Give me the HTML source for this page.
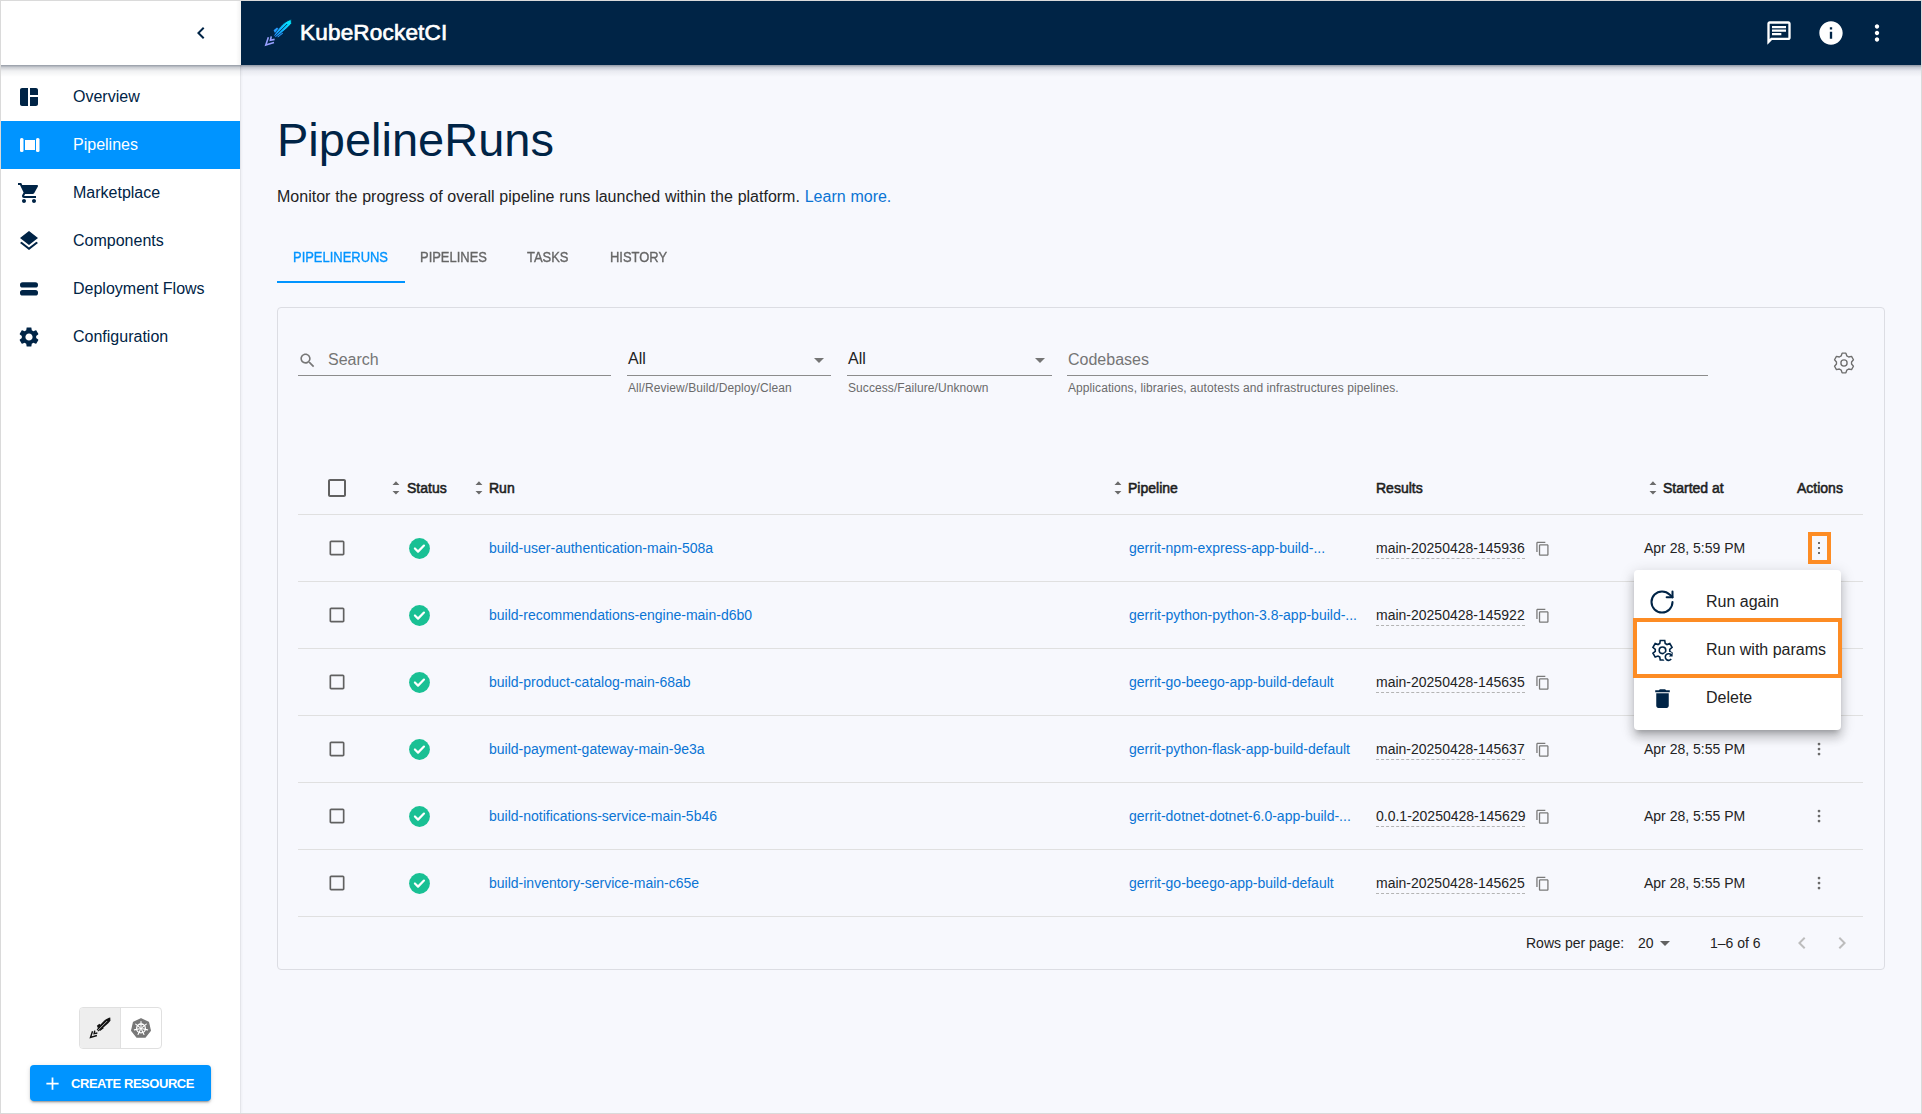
<!DOCTYPE html>
<html><head><meta charset="utf-8">
<style>
*{box-sizing:border-box;margin:0;padding:0}
html,body{width:1922px;height:1114px;overflow:hidden}
body{font-family:"Liberation Sans",sans-serif;background:#f7f8fd;position:relative;color:#232323}
.frame{position:absolute;left:0;top:0;width:1922px;height:1114px;border:1px solid #dadada;pointer-events:none;z-index:50}
.abs{position:absolute}
svg{display:block}
/* header */
.topleft{position:absolute;left:1px;top:1px;width:240px;height:64px;background:#fff;z-index:5}
.hdr{position:absolute;left:241px;top:1px;width:1680px;height:64px;background:#002446;z-index:5}
.hshadow{position:absolute;left:1px;top:65px;width:1920px;height:12px;background:linear-gradient(rgba(0,15,40,.42) 0px,rgba(0,15,40,.2) 2.5px,rgba(0,15,40,.06) 6px,rgba(0,15,40,0) 12px);z-index:4}
.tlshade{position:absolute;left:236px;top:1px;width:5px;height:64px;background:linear-gradient(90deg,rgba(0,0,0,0),rgba(0,0,0,.05));z-index:5}
.side{position:absolute;left:1px;top:65px;width:240px;height:1048px;background:#fff;border-right:1px solid #e4e5ea;box-shadow:1px 0 2px rgba(0,0,0,.04);z-index:3}
.nav{position:absolute;left:0;width:239px;height:48px;margin-top:1px}
.nav .ic{position:absolute;left:16px;top:12px;width:24px;height:24px}
.nav .tx{position:absolute;left:72px;top:0;line-height:48px;font-size:16px;color:#002446}
.nav.act{background:#0094ff}
.nav.act .tx{color:#fff}
.main{position:absolute;left:0;top:0;width:1922px;height:1114px}
.t{white-space:nowrap}
.tab{top:247px;font-size:14px;line-height:20px;color:#666;white-space:nowrap;transform:scaleX(0.925);transform-origin:0 0;-webkit-text-stroke:0.35px #666}
.tab.act{-webkit-text-stroke:0.35px #0094ff}
.tab.act{color:#0094ff}
.card{position:absolute;left:277px;top:307px;width:1608px;height:663px;border:1px solid #dcdde3;border-radius:4px}
.uline{top:375px;height:1px;background:#8c8c8c}
.help{top:380px;font-size:12px;line-height:16px;color:#6b6b6b;white-space:nowrap;letter-spacing:0.08px}
.th{top:478px;font-size:14px;line-height:20px;color:#1e1e1e;white-space:nowrap;-webkit-text-stroke:0.55px #1e1e1e}
.td{font-size:14px;line-height:20px;color:#232323;white-space:nowrap}
.lk{color:#0a74d4}
.res{border-bottom:1px dashed #b4b4b4;line-height:19px;height:21px;padding-top:1px}
.rline{left:298px;width:1565px;height:1px;background:#e0e0e0}
.menu{position:absolute;left:1634px;top:570px;width:207px;height:160px;background:#fff;border-radius:4px;box-shadow:0 5px 5px -3px rgba(0,0,0,.2),0 8px 10px 1px rgba(0,0,0,.14),0 3px 14px 2px rgba(0,0,0,.12);z-index:10}
.mi{left:72px;font-size:16px;line-height:24px;color:#232323;white-space:nowrap}
.obox{border:4px solid #fd8c24;z-index:12}
.btn{left:30px;top:1065px;width:181px;height:36px;background:#0094ff;border-radius:4px;box-shadow:0 3px 1px -2px rgba(0,0,0,.2),0 2px 2px 0 rgba(0,0,0,.14),0 1px 5px 0 rgba(0,0,0,.12);z-index:6}
</style></head><body>
<div class="frame"></div>
<div class="topleft">
  <svg class="abs" style="left:188px;top:20px" width="24" height="24" viewBox="0 0 24 24"><path fill="#002446" d="M15.41 7.41L14 6l-6 6 6 6 1.41-1.41L10.83 12z"/></svg>
</div>
<div class="hdr">
  <div class="abs" style="left:59px;top:0;line-height:64px;font-size:22.5px;letter-spacing:0.2px;-webkit-text-stroke:0.7px #fff;color:#fff">KubeRocketCI</div>
</div>
<div class="hshadow"></div><div class="tlshade"></div>
<div class="side">
  <div class="nav" style="top:7px"><svg class="ic" viewBox="0 0 24 24"><path fill="#002446" d="M11 21H5c-1.1 0-2-.9-2-2V5c0-1.1.9-2 2-2h6v18zm2 0h6c1.1 0 2-.9 2-2v-7h-8v9zm8-11V5c0-1.1-.9-2-2-2h-6v7h8z"/></svg><div class="tx">Overview</div></div>
  <div class="nav act" style="top:55px"><svg class="ic" viewBox="0 0 24 24"><rect x="3" y="5" width="3.5" height="14" rx="1.5" fill="#fff"/><rect x="8" y="7" width="10" height="10" fill="#fff"/><rect x="19" y="5" width="3.5" height="14" rx="1.5" fill="#fff"/></svg><div class="tx">Pipelines</div></div>
  <div class="nav" style="top:103px"><svg class="ic" viewBox="0 0 24 24"><path fill="#002446" d="M7 18c-1.1 0-1.99.9-1.99 2S5.9 22 7 22s2-.9 2-2-.9-2-2-2zM1 2v2h2l3.6 7.59-1.35 2.45c-.16.28-.25.61-.25.96 0 1.1.9 2 2 2h12v-2H7.42c-.14 0-.25-.11-.25-.25l.03-.12.9-1.630h7.45c.75 0 1.41-.41 1.75-1.03l3.58-6.49c.08-.14.12-.31.12-.48 0-.55-.45-1-1-1H5.21l-.94-2H1zm16 16c-1.1 0-1.99.9-1.99 2s.89 2 1.99 2 2-.9 2-2-.9-2-2-2z"/></svg><div class="tx">Marketplace</div></div>
  <div class="nav" style="top:151px"><svg class="ic" viewBox="0 0 24 24"><path fill="#002446" d="M11.99 18.54l-7.37-5.73L3 14.07l9 7 9-7-1.63-1.27-7.38 5.74zM12 16l7.36-5.73L21 9l-9-7-9 7 1.63 1.27L12 16z"/></svg><div class="tx">Components</div></div>
  <div class="nav" style="top:199px"><svg class="ic" viewBox="0 0 24 24"><rect x="3" y="5.2" width="18" height="5.3" rx="2.6" fill="#002446"/><rect x="3" y="13" width="18" height="5.6" rx="2.6" fill="#002446"/></svg><div class="tx">Deployment Flows</div></div>
  <div class="nav" style="top:247px"><svg class="ic" viewBox="0 0 24 24"><path fill="#002446" d="M19.14 12.94c.04-.3.06-.61.06-.94 0-.32-.02-.64-.07-.94l2.03-1.58c.18-.14.23-.41.12-.61l-1.92-3.32c-.12-.22-.37-.29-.59-.22l-2.39.96c-.5-.38-1.030-.7-1.62-.94l-.36-2.54c-.04-.24-.24-.41-.48-.41h-3.84c-.24 0-.43.17-.47.41l-.36 2.54c-.59.24-1.13.57-1.62.94l-2.39-.96c-.22-.08-.47 0-.59.22L2.74 8.87c-.12.21-.08.47.12.61l2.03 1.58c-.05.3-.09.63-.09.94s.02.64.07.94l-2.03 1.58c-.18.14-.23.41-.12.61l1.920 3.32c.12.22.37.29.59.22l2.39-.96c.5.38 1.03.7 1.62.94l.36 2.54c.05.24.24.41.48.41h3.84c.24 0 .44-.17.47-.41l.36-2.54c.59-.24 1.13-.56 1.62-.94l2.39.96c.22.08.47 0 .59-.22l1.92-3.32c.12-.22.07-.47-.12-.61l-2.01-1.58zM12 15.6c-1.98 0-3.6-1.62-3.6-3.6s1.62-3.6 3.6-3.6 3.6 1.62 3.6 3.6-1.62 3.6-3.6 3.6z"/></svg><div class="tx">Configuration</div></div>
</div>
<!-- MAIN -->
<div class="main">
  <div class="abs t" style="left:277px;top:112px;font-size:47px;line-height:56px;color:#002446">PipelineRuns</div>
  <div class="abs t" style="left:277px;top:185px;font-size:16px;line-height:24px;color:#232323;word-spacing:0.35px">Monitor the progress of overall pipeline runs launched within the platform. <span style="color:#0a74d4">Learn more.</span></div>
  <div class="abs tab act" style="left:293px">PIPELINERUNS</div>
  <div class="abs tab" style="left:420px">PIPELINES</div>
  <div class="abs tab" style="left:527px">TASKS</div>
  <div class="abs tab" style="left:610px">HISTORY</div>
  <div class="abs" style="left:277px;top:281px;width:128px;height:2px;background:#0094ff"></div>
  <div class="card"></div>
  <!-- filters -->
  <svg class="abs" style="left:298px;top:351px" width="19" height="19" viewBox="0 0 24 24"><path fill="#777" d="M15.5 14h-.79l-.28-.27C15.410 12.59 16 11.11 16 9.5 16 5.91 13.09 3 9.5 3S3 5.91 3 9.5 5.91 16 9.5 16c1.61 0 3.09-.59 4.23-1.57l.27.28v.79l5 4.99L20.49 19l-4.99-5zm-6 0C7.01 14 5 11.99 5 9.5S7.01 5 9.5 5 14 7.01 14 9.5 11.99 14 9.5 14z"/></svg>
  <div class="abs t" style="left:328px;top:348px;font-size:16px;line-height:24px;color:#757575">Search</div>
  <div class="abs uline" style="left:298px;width:313px"></div>
  <div class="abs t" style="left:628px;top:347px;font-size:16px;line-height:24px;color:#232323">All</div>
  <svg class="abs" style="left:807px;top:348px" width="24" height="24" viewBox="0 0 24 24"><path fill="#757575" d="M7 10l5 5 5-5z"/></svg>
  <div class="abs uline" style="left:627px;width:204px"></div>
  <div class="abs help" style="left:628px">All/Review/Build/Deploy/Clean</div>
  <div class="abs t" style="left:848px;top:347px;font-size:16px;line-height:24px;color:#232323">All</div>
  <svg class="abs" style="left:1028px;top:348px" width="24" height="24" viewBox="0 0 24 24"><path fill="#757575" d="M7 10l5 5 5-5z"/></svg>
  <div class="abs uline" style="left:847px;width:205px"></div>
  <div class="abs help" style="left:848px">Success/Failure/Unknown</div>
  <div class="abs t" style="left:1068px;top:348px;font-size:16px;line-height:24px;color:#757575">Codebases</div>
  <div class="abs uline" style="left:1067px;width:641px"></div>
  <div class="abs help" style="left:1068px">Applications, libraries, autotests and infrastructures pipelines.</div>
  <svg class="abs" style="left:1832px;top:351px" width="24" height="24" viewBox="0 0 24 24" fill="none" stroke="#6e6e6e" stroke-width="1.35" stroke-linejoin="round"><path d="M14.85 4.95 L13.91 2.18 L10.09 2.18 L9.15 4.95 L7.32 6.01 L4.45 5.44 L2.54 8.74 L4.47 10.94 L4.47 13.06 L2.54 15.26 L4.45 18.56 L7.32 17.99 L9.15 19.05 L10.09 21.82 L13.91 21.82 L14.85 19.05 L16.68 17.99 L19.55 18.56 L21.46 15.26 L19.53 13.06 L19.53 10.94 L21.46 8.74 L19.55 5.44 L16.68 6.01Z"/><circle cx="12" cy="12" r="3.1"/></svg>
<!-- TABLE -->
<svg class="abs" style="left:325px;top:476px" width="24" height="24" viewBox="0 0 24 24"><path fill="#616161" d="M19 5v14H5V5h14m0-2H5c-1.1 0-2 .9-2 2v14c0 1.1.9 2 2 2h14c1.1 0 2-.9 2-2V5c0-1.1-.9-2-2-2z"/></svg>
<svg class="abs" style="left:391px;top:478px" width="10" height="20" viewBox="0 0 10 20"><path fill="#6b6b6b" d="M1.5 6.9L4.95 3.3 8.4 6.9z M1.5 13.1L4.95 16.6 8.4 13.1z"/></svg>
<div class="abs th" style="left:407px">Status</div>
<svg class="abs" style="left:474px;top:478px" width="10" height="20" viewBox="0 0 10 20"><path fill="#6b6b6b" d="M1.5 6.9L4.95 3.3 8.4 6.9z M1.5 13.1L4.95 16.6 8.4 13.1z"/></svg>
<div class="abs th" style="left:489px">Run</div>
<svg class="abs" style="left:1113px;top:478px" width="10" height="20" viewBox="0 0 10 20"><path fill="#6b6b6b" d="M1.5 6.9L4.95 3.3 8.4 6.9z M1.5 13.1L4.95 16.6 8.4 13.1z"/></svg>
<div class="abs th" style="left:1128px">Pipeline</div>
<div class="abs th" style="left:1376px">Results</div>
<svg class="abs" style="left:1648px;top:478px" width="10" height="20" viewBox="0 0 10 20"><path fill="#6b6b6b" d="M1.5 6.9L4.95 3.3 8.4 6.9z M1.5 13.1L4.95 16.6 8.4 13.1z"/></svg>
<div class="abs th" style="left:1663px">Started at</div>
<div class="abs th" style="left:1797px">Actions</div>
<div class="abs rline" style="top:514px"></div>
<svg class="abs" style="left:327px;top:538px" width="20" height="20" viewBox="0 0 24 24"><path fill="#616161" d="M19 5v14H5V5h14m0-2H5c-1.1 0-2 .9-2 2v14c0 1.1.9 2 2 2h14c1.1 0 2-.9 2-2V5c0-1.1-.9-2-2-2z"/></svg>
<svg class="abs" style="left:407px;top:536px" width="25" height="25" viewBox="0 0 24 24"><circle cx="12" cy="12" r="10" fill="#19c094"/><path fill="none" stroke="#fff" stroke-width="2.1" stroke-linecap="round" stroke-linejoin="round" d="M7.6 12L10.6 15 16.3 9.2"/></svg>
<div class="abs td lk" style="left:489px;top:538px">build-user-authentication-main-508a</div>
<div class="abs td lk" style="left:1129px;top:538px">gerrit-npm-express-app-build-...</div>
<div class="abs td res" style="left:1376px;top:538px">main-20250428-145936</div>
<svg class="abs" style="left:1534.5px;top:541px" width="15.5" height="15.5" viewBox="0 0 24 24"><path fill="#7a7a7a" d="M16 1H4c-1.1 0-2 .9-2 2v14h2V3h12V1zm3 4H8c-1.1 0-2 .9-2 2v14c0 1.1.9 2 2 2h11c1.1 0 2-.9 2-2V7c0-1.1-.9-2-2-2zm0 16H8V7h11v14z"/></svg>
<div class="abs td" style="left:1644px;top:538px">Apr 28, 5:59 PM</div>
<svg class="abs" style="left:1809px;top:538px" width="20" height="20" viewBox="0 0 20 20"><g fill="#6e6e6e"><rect x="9" y="4" width="2" height="2"/><rect x="9" y="9" width="2" height="2"/><rect x="9" y="14" width="2" height="2"/></g></svg>
<div class="abs rline" style="top:581px"></div>
<svg class="abs" style="left:327px;top:605px" width="20" height="20" viewBox="0 0 24 24"><path fill="#616161" d="M19 5v14H5V5h14m0-2H5c-1.1 0-2 .9-2 2v14c0 1.1.9 2 2 2h14c1.1 0 2-.9 2-2V5c0-1.1-.9-2-2-2z"/></svg>
<svg class="abs" style="left:407px;top:603px" width="25" height="25" viewBox="0 0 24 24"><circle cx="12" cy="12" r="10" fill="#19c094"/><path fill="none" stroke="#fff" stroke-width="2.1" stroke-linecap="round" stroke-linejoin="round" d="M7.6 12L10.6 15 16.3 9.2"/></svg>
<div class="abs td lk" style="left:489px;top:605px">build-recommendations-engine-main-d6b0</div>
<div class="abs td lk" style="left:1129px;top:605px">gerrit-python-python-3.8-app-build-...</div>
<div class="abs td res" style="left:1376px;top:605px">main-20250428-145922</div>
<svg class="abs" style="left:1534.5px;top:608px" width="15.5" height="15.5" viewBox="0 0 24 24"><path fill="#7a7a7a" d="M16 1H4c-1.1 0-2 .9-2 2v14h2V3h12V1zm3 4H8c-1.1 0-2 .9-2 2v14c0 1.1.9 2 2 2h11c1.1 0 2-.9 2-2V7c0-1.1-.9-2-2-2zm0 16H8V7h11v14z"/></svg>
<div class="abs td" style="left:1644px;top:605px">Apr 28, 5:59 PM</div>
<svg class="abs" style="left:1809px;top:605px" width="20" height="20" viewBox="0 0 24 24"><g fill="#6b6b6b"><circle cx="12" cy="6" r="1.65"/><circle cx="12" cy="12" r="1.65"/><circle cx="12" cy="18" r="1.65"/></g></svg>
<div class="abs rline" style="top:648px"></div>
<svg class="abs" style="left:327px;top:672px" width="20" height="20" viewBox="0 0 24 24"><path fill="#616161" d="M19 5v14H5V5h14m0-2H5c-1.1 0-2 .9-2 2v14c0 1.1.9 2 2 2h14c1.1 0 2-.9 2-2V5c0-1.1-.9-2-2-2z"/></svg>
<svg class="abs" style="left:407px;top:670px" width="25" height="25" viewBox="0 0 24 24"><circle cx="12" cy="12" r="10" fill="#19c094"/><path fill="none" stroke="#fff" stroke-width="2.1" stroke-linecap="round" stroke-linejoin="round" d="M7.6 12L10.6 15 16.3 9.2"/></svg>
<div class="abs td lk" style="left:489px;top:672px">build-product-catalog-main-68ab</div>
<div class="abs td lk" style="left:1129px;top:672px">gerrit-go-beego-app-build-default</div>
<div class="abs td res" style="left:1376px;top:672px">main-20250428-145635</div>
<svg class="abs" style="left:1534.5px;top:675px" width="15.5" height="15.5" viewBox="0 0 24 24"><path fill="#7a7a7a" d="M16 1H4c-1.1 0-2 .9-2 2v14h2V3h12V1zm3 4H8c-1.1 0-2 .9-2 2v14c0 1.1.9 2 2 2h11c1.1 0 2-.9 2-2V7c0-1.1-.9-2-2-2zm0 16H8V7h11v14z"/></svg>
<div class="abs td" style="left:1644px;top:672px">Apr 28, 5:56 PM</div>
<svg class="abs" style="left:1809px;top:672px" width="20" height="20" viewBox="0 0 24 24"><g fill="#6b6b6b"><circle cx="12" cy="6" r="1.65"/><circle cx="12" cy="12" r="1.65"/><circle cx="12" cy="18" r="1.65"/></g></svg>
<div class="abs rline" style="top:715px"></div>
<svg class="abs" style="left:327px;top:739px" width="20" height="20" viewBox="0 0 24 24"><path fill="#616161" d="M19 5v14H5V5h14m0-2H5c-1.1 0-2 .9-2 2v14c0 1.1.9 2 2 2h14c1.1 0 2-.9 2-2V5c0-1.1-.9-2-2-2z"/></svg>
<svg class="abs" style="left:407px;top:737px" width="25" height="25" viewBox="0 0 24 24"><circle cx="12" cy="12" r="10" fill="#19c094"/><path fill="none" stroke="#fff" stroke-width="2.1" stroke-linecap="round" stroke-linejoin="round" d="M7.6 12L10.6 15 16.3 9.2"/></svg>
<div class="abs td lk" style="left:489px;top:739px">build-payment-gateway-main-9e3a</div>
<div class="abs td lk" style="left:1129px;top:739px">gerrit-python-flask-app-build-default</div>
<div class="abs td res" style="left:1376px;top:739px">main-20250428-145637</div>
<svg class="abs" style="left:1534.5px;top:742px" width="15.5" height="15.5" viewBox="0 0 24 24"><path fill="#7a7a7a" d="M16 1H4c-1.1 0-2 .9-2 2v14h2V3h12V1zm3 4H8c-1.1 0-2 .9-2 2v14c0 1.1.9 2 2 2h11c1.1 0 2-.9 2-2V7c0-1.1-.9-2-2-2zm0 16H8V7h11v14z"/></svg>
<div class="abs td" style="left:1644px;top:739px">Apr 28, 5:55 PM</div>
<svg class="abs" style="left:1809px;top:739px" width="20" height="20" viewBox="0 0 24 24"><g fill="#6b6b6b"><circle cx="12" cy="6" r="1.65"/><circle cx="12" cy="12" r="1.65"/><circle cx="12" cy="18" r="1.65"/></g></svg>
<div class="abs rline" style="top:782px"></div>
<svg class="abs" style="left:327px;top:806px" width="20" height="20" viewBox="0 0 24 24"><path fill="#616161" d="M19 5v14H5V5h14m0-2H5c-1.1 0-2 .9-2 2v14c0 1.1.9 2 2 2h14c1.1 0 2-.9 2-2V5c0-1.1-.9-2-2-2z"/></svg>
<svg class="abs" style="left:407px;top:804px" width="25" height="25" viewBox="0 0 24 24"><circle cx="12" cy="12" r="10" fill="#19c094"/><path fill="none" stroke="#fff" stroke-width="2.1" stroke-linecap="round" stroke-linejoin="round" d="M7.6 12L10.6 15 16.3 9.2"/></svg>
<div class="abs td lk" style="left:489px;top:806px">build-notifications-service-main-5b46</div>
<div class="abs td lk" style="left:1129px;top:806px">gerrit-dotnet-dotnet-6.0-app-build-...</div>
<div class="abs td res" style="left:1376px;top:806px">0.0.1-20250428-145629</div>
<svg class="abs" style="left:1534.5px;top:809px" width="15.5" height="15.5" viewBox="0 0 24 24"><path fill="#7a7a7a" d="M16 1H4c-1.1 0-2 .9-2 2v14h2V3h12V1zm3 4H8c-1.1 0-2 .9-2 2v14c0 1.1.9 2 2 2h11c1.1 0 2-.9 2-2V7c0-1.1-.9-2-2-2zm0 16H8V7h11v14z"/></svg>
<div class="abs td" style="left:1644px;top:806px">Apr 28, 5:55 PM</div>
<svg class="abs" style="left:1809px;top:806px" width="20" height="20" viewBox="0 0 24 24"><g fill="#6b6b6b"><circle cx="12" cy="6" r="1.65"/><circle cx="12" cy="12" r="1.65"/><circle cx="12" cy="18" r="1.65"/></g></svg>
<div class="abs rline" style="top:849px"></div>
<svg class="abs" style="left:327px;top:873px" width="20" height="20" viewBox="0 0 24 24"><path fill="#616161" d="M19 5v14H5V5h14m0-2H5c-1.1 0-2 .9-2 2v14c0 1.1.9 2 2 2h14c1.1 0 2-.9 2-2V5c0-1.1-.9-2-2-2z"/></svg>
<svg class="abs" style="left:407px;top:871px" width="25" height="25" viewBox="0 0 24 24"><circle cx="12" cy="12" r="10" fill="#19c094"/><path fill="none" stroke="#fff" stroke-width="2.1" stroke-linecap="round" stroke-linejoin="round" d="M7.6 12L10.6 15 16.3 9.2"/></svg>
<div class="abs td lk" style="left:489px;top:873px">build-inventory-service-main-c65e</div>
<div class="abs td lk" style="left:1129px;top:873px">gerrit-go-beego-app-build-default</div>
<div class="abs td res" style="left:1376px;top:873px">main-20250428-145625</div>
<svg class="abs" style="left:1534.5px;top:876px" width="15.5" height="15.5" viewBox="0 0 24 24"><path fill="#7a7a7a" d="M16 1H4c-1.1 0-2 .9-2 2v14h2V3h12V1zm3 4H8c-1.1 0-2 .9-2 2v14c0 1.1.9 2 2 2h11c1.1 0 2-.9 2-2V7c0-1.1-.9-2-2-2zm0 16H8V7h11v14z"/></svg>
<div class="abs td" style="left:1644px;top:873px">Apr 28, 5:55 PM</div>
<svg class="abs" style="left:1809px;top:873px" width="20" height="20" viewBox="0 0 24 24"><g fill="#6b6b6b"><circle cx="12" cy="6" r="1.65"/><circle cx="12" cy="12" r="1.65"/><circle cx="12" cy="18" r="1.65"/></g></svg>
<div class="abs rline" style="top:916px"></div>
<div class="abs td" style="left:1526px;top:933px">Rows per page:</div>
<div class="abs td" style="left:1638px;top:933px">20</div>
<svg class="abs" style="left:1653px;top:931px" width="24" height="24" viewBox="0 0 24 24"><path fill="#616161" d="M7 10l5 5 5-5z"/></svg>
<div class="abs td" style="left:1710px;top:933px">1–6 of 6</div>
<svg class="abs" style="left:1790px;top:931px" width="24" height="24" viewBox="0 0 24 24"><path fill="#bdbdbd" d="M15.41 7.41L14 6l-6 6 6 6 1.41-1.41L10.83 12z"/></svg>
<svg class="abs" style="left:1830px;top:931px" width="24" height="24" viewBox="0 0 24 24"><path fill="#bdbdbd" d="M10 6L8.59 7.41 13.17 12l-4.58 4.59L10 18l6-6z"/></svg>
<!-- /TABLE -->
</div>
<!-- OVERLAYS -->
<div class="menu">
  <svg class="abs" style="left:14px;top:18px" width="28" height="28" viewBox="0 0 24 24" fill="none" stroke="#002446" stroke-width="1.75" stroke-linecap="round" stroke-linejoin="round"><path d="M21 12a9 9 0 1 1-9-9c2.52 0 4.93 1 6.74 2.74L21 8"/><path d="M21 3v5h-5"/></svg>
  <div class="abs mi" style="top:20px">Run again</div>
  <svg class="abs" style="left:16px;top:68px" width="24" height="24" viewBox="0 0 24 24"><defs><mask id="gm"><rect width="24" height="24" fill="#fff"/><circle cx="18.6" cy="19.3" r="5.6" fill="#000"/></mask></defs><g mask="url(#gm)" fill="none" stroke="#002446" stroke-width="1.6" stroke-linejoin="miter"><path d="M15.23 5.53 L14.75 2.56 L10.25 2.56 L9.77 5.53 L8.01 6.55 L5.19 5.48 L2.94 9.38 L5.27 11.28 L5.27 13.32 L2.94 15.22 L5.19 19.12 L8.01 18.05 L9.77 19.07 L10.25 22.04 L14.75 22.04 L15.23 19.07 L16.99 18.05 L19.81 19.12 L22.06 15.22 L19.730 13.32 L19.73 11.28 L22.06 9.38 L19.81 5.48 L16.99 6.55Z"/><circle cx="12.5" cy="12.3" r="3.3"/></g><path fill="none" stroke="#002446" stroke-width="1.6" d="M21.2 21.1 A3.3 3.3 0 1 1 21.4 17.3"/><path fill="#002446" d="M22.6 14.6 V18.6 H18.8z"/></svg>
  <div class="abs mi" style="top:68px">Run with params</div>
  <svg class="abs" style="left:16px;top:116px" width="25" height="25" viewBox="0 0 24 24"><path fill="#002446" d="M6 19c0 1.1.9 2 2 2h8c1.1 0 2-.9 2-2V7H6v12zM19 4h-3.5l-1-1h-5l-1 1H5v2h14V4z"/></svg>
  <div class="abs mi" style="top:116px">Delete</div>
</div>
<div class="abs obox" style="left:1633px;top:618px;width:209px;height:60px"></div>
<div class="abs obox" style="left:1808px;top:532px;width:23px;height:32px"></div>
<!-- header icons -->
<svg class="abs" style="left:1765px;top:19px;z-index:6" width="28" height="28" viewBox="0 0 24 24"><path fill="#fff" d="M4 4h16v12H5.17L4 17.17V4m0-2c-1.1 0-1.99.9-1.99 2L2 22l4-4h14c1.1 0 2-.9 2-2V4c0-1.1-.9-2-2-2H4zm2 10h8v2H6v-2zm0-3h12v2H6V9zm0-3h12v2H6V6z"/></svg>
<svg class="abs" style="left:1817px;top:19px;z-index:6" width="28" height="28" viewBox="0 0 24 24"><path fill="#fff" d="M12 2C6.48 2 2 6.48 2 12s4.48 10 10 10 10-4.48 10-10S17.52 2 12 2zm1 15h-2v-6h2v6zm0-8h-2V7h2v2z"/></svg>
<svg class="abs" style="left:1864px;top:20px;z-index:6" width="26" height="26" viewBox="0 0 24 24"><path fill="#fff" d="M12 8c1.1 0 2-.9 2-2s-.9-2-2-2-2 .9-2 2 .9 2 2 2zm0 2c-1.1 0-2 .9-2 2s.9 2 2 2 2-.9 2-2-.9-2-2-2zm0 6c-1.1 0-2 .9-2 2s.9 2 2 2 2-.9 2-2-.9-2-2-2z"/></svg>
<!-- logo -->
<svg class="abs" style="left:260px;top:15px;z-index:6" width="36" height="36" viewBox="0 0 36 36">
  <defs><linearGradient id="lg" x1="31" y1="5" x2="14" y2="22" gradientUnits="userSpaceOnUse"><stop offset="0" stop-color="#00f0ff"/><stop offset="1" stop-color="#2088ff"/></linearGradient></defs>
  <path fill="#2a9cff" d="M13.6 15.2 L17 12.4 L19.2 14.6 L15.2 18.6z"/>
  <path fill="#2a9cff" d="M17.8 22.4 L23 18.4 L21.4 16.6 L17.2 20.8z"/>
  <path fill="url(#lg)" stroke="#002446" stroke-width="0.8" d="M31.2 4.6 C27 5.2 21 9.5 13.8 20.2 L15.6 22.6 C22.5 17.5 28.5 12.5 31.4 8.6 Z"/>
  <path fill="none" stroke="#002446" stroke-width="0.9" d="M14.6 21.6 L27.2 9"/>
  <path fill="none" stroke="#98a0ff" stroke-width="1.6" stroke-linejoin="miter" d="M8.4 22.2 L5.8 30 L14 27.6 M11.3 21.4 L10.4 25.2 L14.6 24.4"/>
</svg>
<!-- sidebar bottom -->
<div class="abs" style="left:79px;top:1007px;width:83px;height:42px;border:1px solid #e0e0e0;border-radius:4px;background:#fff;z-index:6;overflow:hidden">
  <div class="abs" style="left:0;top:0;width:41px;height:40px;background:#eeeeee;border-right:1px solid #e0e0e0"></div>
  <svg class="abs" style="left:6px;top:6px" width="28" height="28" viewBox="0 0 36 36"><path fill="#111" d="M31.2 4.6 C27 5.2 21 9.5 13.8 20.2 L15.6 22.6 C22.5 17.5 28.5 12.5 31.4 8.6 Z"/><path fill="#111" d="M14 15 L17.2 12.6 L19 14.4 L15.4 18.4z"/><path fill="#111" d="M18 21.8 L22.8 18.2 L21.6 16.8 L17.4 20.6z"/><path fill="none" stroke="#eee" stroke-width="0.9" d="M14.6 21.6 L27.2 9"/><path fill="none" stroke="#111" stroke-width="1.8" d="M8.4 22.2 L5.8 30 L14 27.6 M11.3 21.4 L10.4 25.2 L14.6 24.4"/></svg>
  <svg class="abs" style="left:50.7px;top:9.7px" width="20" height="20" viewBox="0 0 20 20"><path fill="#777" stroke="#777" stroke-width="1.2" stroke-linejoin="round" d="M10.00 0.80 L17.51 4.41 L19.36 12.54 L14.17 19.05 L5.83 19.05 L0.64 12.54 L2.49 4.41Z"/><g fill="none" stroke="#fff"><circle cx="10" cy="10.4" r="4.4" stroke-width="1.3"/><path stroke-width="1.1" stroke-linecap="round" d="M10.00 8.80L10.00 3.60M11.25 9.40L15.32 6.16M11.56 10.76L16.63 11.91M10.69 11.84L12.95 16.53M9.31 11.84L7.05 16.53M8.44 10.76L3.37 11.91M8.75 9.40L4.68 6.16"/></g><circle cx="10" cy="10.4" r="1.2" fill="#fff"/></svg>
</div>
<div class="abs btn"><svg class="abs" style="left:11.5px;top:8px" width="21" height="21" viewBox="0 0 24 24"><path fill="#fff" d="M19 13h-6v6h-2v-6H5v-2h6V5h2v6h6v2z"/></svg><div class="abs" style="left:41px;top:9px;font-size:13px;line-height:20px;font-weight:bold;color:#fff;letter-spacing:-0.45px;white-space:nowrap">CREATE RESOURCE</div></div>
<!-- /OVERLAYS -->
</body></html>
